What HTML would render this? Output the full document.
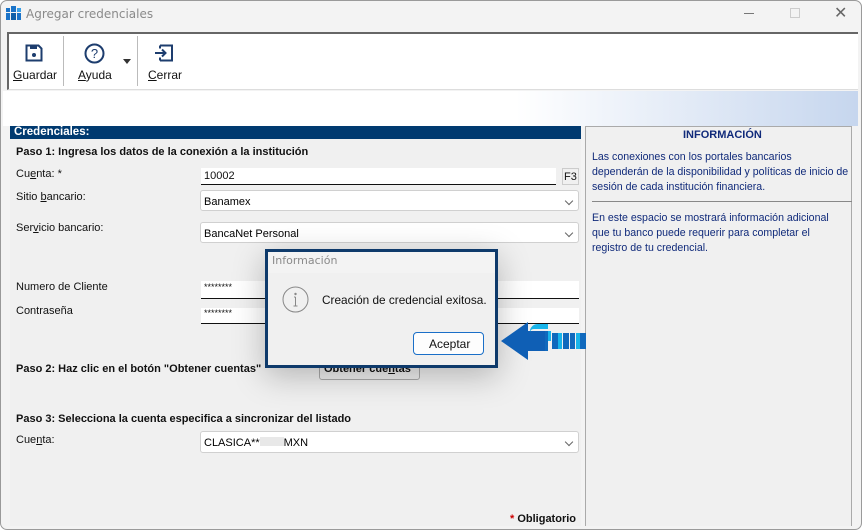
<!DOCTYPE html>
<html><head><meta charset="utf-8"><style>
*{margin:0;padding:0;box-sizing:border-box}
body{width:866px;height:531px;background:#fff;font-family:"Liberation Sans",Arial,sans-serif;position:relative;overflow:hidden}
.abs{position:absolute}
.win{left:0;top:0;width:862px;height:530px;background:#f3f3f3;border:1px solid #9a9a9a;border-radius:7px}
.t{font-size:11px;color:#111;position:absolute;white-space:nowrap}
.b{font-weight:bold}
.u{text-decoration:underline}
.inp{position:absolute;background:#fff;border-bottom:1px solid #111}
.sel{position:absolute;background:#fff;border:1px solid #d0d0d0;border-radius:3px;font-size:11px;padding:5px 0 0 3px}
.chev{position:absolute;right:6px;top:7px;width:6px;height:6px;border-right:1px solid #666;border-bottom:1px solid #666;transform:rotate(45deg)}
</style></head><body>
<div class="abs win"></div>
<svg class="abs" style="left:6px;top:6px" width="16" height="16"><rect x="0" y="2" width="4" height="4" fill="#1a73c8"/><rect x="5" y="0" width="5" height="6" fill="#1a73c8"/><rect x="11" y="2" width="4" height="4" fill="#39a0e8"/><rect x="0" y="7" width="4" height="7" fill="#1a73c8"/><rect x="5" y="7" width="5" height="7" fill="#0f5fa8"/><rect x="11" y="7" width="4" height="7" fill="#1a73c8"/></svg>
<div class="t" style="left:26px;top:7px;color:#8a8a8a;font-family:'DejaVu Sans',sans-serif;font-size:12px">Agregar credenciales</div>
<div class="abs" style="left:744px;top:13px;width:10px;border-top:1px solid #777"></div>
<div class="abs" style="left:790px;top:8px;width:10px;height:10px;border:1px solid #ccc"></div>
<div class="t" style="left:834px;top:3px;font-size:16px;color:#666">✕</div>
<div class="abs" style="left:7px;top:32px;width:851px;height:58px;background:#fff;border-top:2px solid #666;border-left:2px solid #666;border-bottom:1px solid #ddd"></div>
<div class="abs" style="left:63px;top:36px;height:50px;border-left:1px solid #bbb"></div>
<div class="abs" style="left:137px;top:36px;height:50px;border-left:1px solid #bbb"></div>
<svg class="abs" style="left:25px;top:44px" width="18" height="18"><path d="M1.5 1.5h12l3 3v12h-15z" fill="none" stroke="#1d3d6e" stroke-width="2"/><rect x="5" y="2" width="7" height="3" fill="#1d3d6e"/><circle cx="9" cy="11" r="2" fill="#1d3d6e"/></svg>
<div class="t" style="left:13px;top:68px;font-size:12px"><span class="u">G</span>uardar</div>
<svg class="abs" style="left:84px;top:43px" width="21" height="21"><circle cx="10.5" cy="10.5" r="9" fill="none" stroke="#1d3d6e" stroke-width="2"/><text x="10.5" y="15" font-size="13" text-anchor="middle" fill="#1d3d6e" font-family="Liberation Sans">?</text></svg>
<div class="t" style="left:78px;top:68px;font-size:12px"><span class="u">A</span>yuda</div>
<div class="abs" style="left:123px;top:59px;border-left:4px solid transparent;border-right:4px solid transparent;border-top:5px solid #333"></div>
<svg class="abs" style="left:154px;top:44px" width="20" height="18"><path d="M6 1.5h12v15H6M6 1.5v3M6 16.5v-3" fill="none" stroke="#1d3d6e" stroke-width="2"/><path d="M1 9h10M8 5.5l3.5 3.5L8 12.5" fill="none" stroke="#1d3d6e" stroke-width="2"/></svg>
<div class="t" style="left:148px;top:68px;font-size:12px"><span class="u">C</span>errar</div>
<div class="abs" style="left:3px;top:91px;width:855px;height:35px;background:linear-gradient(90deg,#fff 0%,#fff 60%,#c6d6ee 100%)"></div>
<div class="abs" style="left:10px;top:126px;width:571px;height:400px;background:#f0f0f0"></div>
<div class="abs" style="left:10px;top:126px;width:571px;height:13px;background:#003a70"></div>
<div class="t b" style="left:14px;top:126px;color:#fff;font-size:11.5px">Credenciales:</div>
<div class="t b" style="left:16px;top:146px">Paso 1: Ingresa los datos de la conexión a la institución</div>
<div class="t" style="left:16px;top:168px">Cu<span class="u">e</span>nta: *</div>
<div class="inp" style="left:201px;top:168px;width:355px;height:17px"><span class="t" style="left:3px;top:2px">10002</span></div>
<div class="t" style="left:562px;top:168px;width:17px;height:17px;border:1px solid #ccc;padding:2px 1px">F3</div>
<div class="t" style="left:16px;top:191px">Sitio <span class="u">b</span>ancario:</div>
<div class="sel" style="left:200px;top:190px;width:379px;height:21px">Banamex<div class="chev"></div></div>
<div class="t" style="left:16px;top:222px">Ser<span class="u">v</span>icio bancario:</div>
<div class="sel" style="left:200px;top:222px;width:379px;height:21px">BancaNet Personal<div class="chev"></div></div>
<div class="t" style="left:16px;top:281px">Numero de Cliente</div>
<div class="inp" style="left:201px;top:281px;width:378px;height:18px"><span class="t" style="left:3px;top:1px;font-size:9px">********</span></div>
<div class="t" style="left:16px;top:305px">Contraseña</div>
<div class="inp" style="left:201px;top:308px;width:378px;height:16px"><span class="t" style="left:3px;top:0px;font-size:9px">********</span></div>
<div class="t b" style="left:16px;top:363px">Paso 2: Haz clic en el botón "Obtener cuentas"</div>
<div class="abs" style="left:319px;top:359px;width:101px;height:21px;border:1px solid #aaa;border-radius:3px;background:#eee"></div>
<div class="t b" style="left:324px;top:363px">Obtener cue<span class="u">n</span>tas</div>
<div class="t b" style="left:16px;top:413px">Paso 3: Selecciona la cuenta especifica a sincronizar del listado</div>
<div class="t" style="left:16px;top:434px">Cue<span class="u">n</span>ta:</div>
<div class="sel" style="left:200px;top:431px;width:379px;height:22px">CLASICA**<span style="display:inline-block;width:24px;height:9px;background:#e8e8e8"></span>MXN<div class="chev"></div></div>
<div class="t b" style="left:510px;top:513px"><span style="color:#c00">*</span> Obligatorio</div>
<div class="abs" style="left:585px;top:126px;width:267px;height:400px;background:#f0f0f0;border:1px solid #aaa;border-bottom:none"></div>
<div class="t b" style="left:683px;top:129px;color:#102a7a">INFORMACIÓN</div>
<div class="t" style="left:592px;top:150px;color:#102a7a;line-height:15px;font-size:10.6px">Las conexiones con los portales bancarios<br>dependerán de la disponibilidad y políticas de inicio de<br>sesión de cada institución financiera.</div>
<div class="abs" style="left:592px;top:201px;width:260px;border-top:1px solid #888"></div>
<div class="t" style="left:592px;top:211px;color:#102a7a;line-height:15px;font-size:10.6px">En este espacio se mostrará información adicional<br>que tu banco puede requerir para completar el<br>registro de tu credencial.</div>
<div class="abs" style="left:265px;top:249px;width:233px;height:119px;background:#f0f0f0;border:3px solid #0e3a6b;box-shadow:0 8px 30px rgba(0,0,0,.25)"></div>
<div class="abs" style="left:268px;top:252px;width:227px;height:21px;background:#f3f3f3"></div>
<div class="t" style="left:272px;top:254px;color:#8a8a8a;font-family:'DejaVu Sans',sans-serif;font-size:11px">Información</div>
<svg class="abs" style="left:282px;top:286px" width="27" height="27"><circle cx="13.5" cy="13.5" r="12.5" fill="none" stroke="#888" stroke-width="1"/><circle cx="13.5" cy="8" r="1.2" fill="#888"/><path d="M13.5 11v9M11.5 20h4M12 11h1.5" stroke="#888" fill="none"/></svg>
<div class="t" style="left:322px;top:293px;font-size:11.8px">Creación de credencial exitosa.</div>
<div class="abs" style="left:413px;top:332px;width:71px;height:23px;border:1px solid #1a6fc8;border-radius:4px;background:#fdfdfd"></div>
<div class="t" style="left:429px;top:337px;font-size:12px">Aceptar</div>
<svg class="abs" style="left:500px;top:321px" width="86" height="40"><path d="M28 1v9H45v20H28v9L1 20z" fill="#0f5fb5"/><path d="M30 9q2-6 8-6h10v5H34q-4 0-4 4z" fill="#18b4ea"/><rect x="45" y="10" width="3" height="20" fill="#1069bd"/><rect x="48" y="10" width="3" height="10" fill="#18b4ea"/><rect x="52" y="12" width="6" height="16" fill="#1069bd"/><rect x="58" y="12" width="4" height="16" fill="#18b4ea"/><rect x="63" y="12" width="6" height="16" fill="#1069bd"/><rect x="70" y="12" width="5" height="16" fill="#1069bd"/><rect x="76" y="12" width="4" height="16" fill="#18b4ea"/><rect x="80" y="12" width="6" height="16" fill="#1069bd"/></svg>
</body></html>
